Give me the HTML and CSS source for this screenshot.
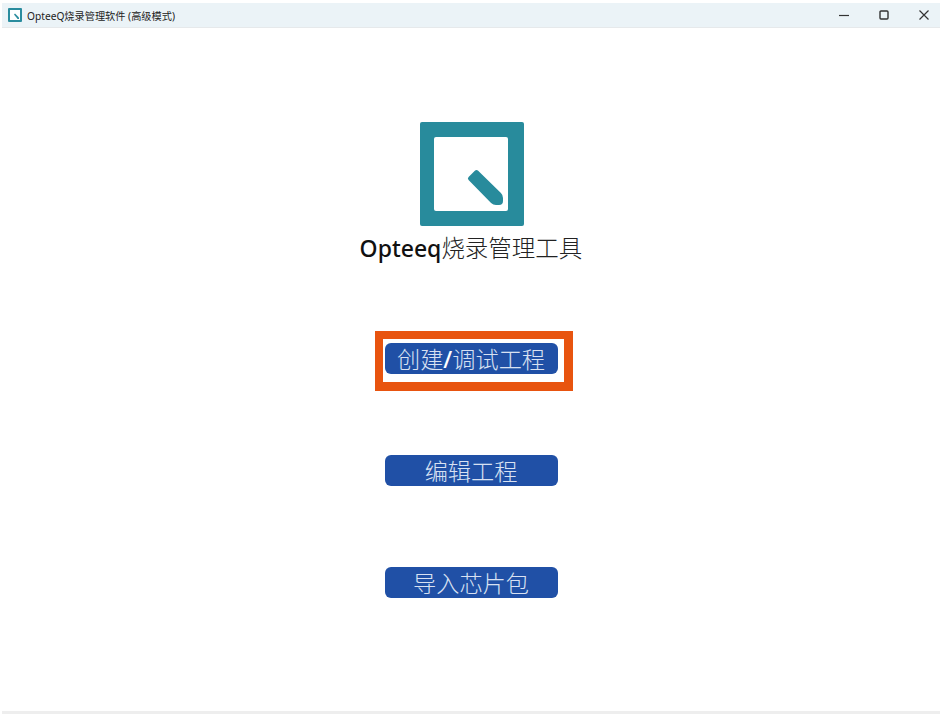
FILE: index.html
```html
<!DOCTYPE html>
<html>
<head>
    <meta charset="utf-8">
    <title>OpteeQ烧录管理软件 (高级模式)</title>
    <link rel="stylesheet" href="styles.css">
</head>
<body>
    <div class="window">
        <div class="title-bar">
            <div class="title-left">
                <svg class="app-icon" width="14" height="14" viewBox="0 0 14 14">
                    <rect width="14" height="14" rx="1" fill="#2a8c9e"/>
                    <rect x="2" y="2" width="10" height="10" fill="#fff"/>
                    <path d="M6 6.6 L7 5.6 L11 9.6 L11 11 L9.6 11 Z" fill="#2a8c9e"/>
                </svg>
                <span class="app-title">OpteeQ烧录管理软件 (高级模式)</span>
            </div>
            <div class="window-controls">
                <svg width="32" height="12" viewBox="4 0 32 12"><path d="M15 6.5h10" stroke="#333" stroke-width="1.2" fill="none"/></svg>
                <svg width="8" height="12"></svg>
                <svg width="32" height="12" viewBox="4 0 32 12"><rect x="16" y="2" width="8" height="8" rx="1" stroke="#333" stroke-width="1.4" fill="none"/></svg>
                <svg width="8" height="12"></svg>
                <svg width="32" height="12" viewBox="4 0 32 12"><path d="M15.5 1.5l9 9M24.5 1.5l-9 9" stroke="#333" stroke-width="1.2" fill="none"/></svg>
            </div>
        </div>

        <div class="main">
            <svg class="logo" width="104" height="104" viewBox="0 0 104 104">
                <rect width="104" height="104" rx="2" fill="#288b9c"/>
                <rect x="14" y="15" width="74" height="74" rx="2" fill="#fff"/>
                <path d="M56.5 50 L50 56.5 L72.5 79.5 Q74 81 76 81 L79 81 Q81 81 81 79 L81 76 Q81 74 79.5 72.5 Z" fill="#288b9c" stroke="#288b9c" stroke-width="4" stroke-linejoin="round"/>
            </svg>
            <h1 class="app-name"><span class="app-name-latin">Opteeq</span>烧录管理工具</h1>

            <div class="actions">
                <div class="action action-marked">
                    <button class="action-btn">创建<span class="slash">/</span>调试工程</button>
                    <div class="marker"></div>
                </div>
                <div class="action">
                    <button class="action-btn">编辑工程</button>
                </div>
                <div class="action">
                    <button class="action-btn">导入芯片包</button>
                </div>
            </div>
        </div>

        <div class="bottom-line"></div>
    </div>
</body>
</html>
```

FILE: styles.css
```css
html, body {
    margin: 0;
    height: 100%;
    background: #fff;
    overflow: hidden;
}

.window {
    height: 714px;
    box-sizing: border-box;
    padding: 3px 5px 0 2px;
    display: flex;
    flex-direction: column;
    font-family: "Noto Sans", "Noto Sans CJK SC", sans-serif;
}

.title-bar {
    height: 24px;
    flex: none;
    display: flex;
    justify-content: space-between;
    align-items: center;
    background: #ebf3f7;
    border-bottom: 1px solid #e6e9eb;
}

.title-left {
    display: flex;
    align-items: center;
    gap: 5px;
    padding-left: 6px;
}

.app-icon {
    display: block;
}

.app-title {
    font-size: 10.2px;
    color: #222;
}

.window-controls {
    display: flex;
}

.window-controls svg {
    display: block;
}

.main {
    flex: 1;
    display: flex;
    flex-direction: column;
    align-items: center;
    padding-top: 94px;
}

.logo {
    display: block;
    margin-left: 1px;
}

.app-name {
    margin: 6px 0 0;
    font-size: 23.5px;
    line-height: 30px;
    font-weight: 300;
    color: #222;
    font-family: "Noto Sans CJK SC", sans-serif;
}

.app-name-latin {
    font-family: "Noto Sans", sans-serif;
    font-weight: 500;
    font-size: 23px;
    color: #111;
}

.actions {
    display: flex;
    flex-direction: column;
    gap: 81px;
    margin-top: 80px;
}

.action {
    position: relative;
}

.action-btn {
    display: block;
    width: 173px;
    height: 31px;
    padding: 0;
    border: none;
    border-radius: 6px;
    background: #2050a6;
    color: #d8e1f2;
    font-family: "Noto Sans CJK SC", sans-serif;
    font-size: 23.2px;
    font-weight: 300;
    line-height: 31px;
    white-space: nowrap;
}

.slash {
    font-family: "Noto Sans", sans-serif;
    font-weight: 500;
    color: #fff;
}

.marker {
    position: absolute;
    left: -10px;
    top: -12px;
    width: 181px;
    height: 43px;
    border: solid #e8540f;
    border-width: 8px 9px 9px 8px;
}

.bottom-line {
    height: 3px;
    flex: none;
    background: #eeeeee;
}
```
